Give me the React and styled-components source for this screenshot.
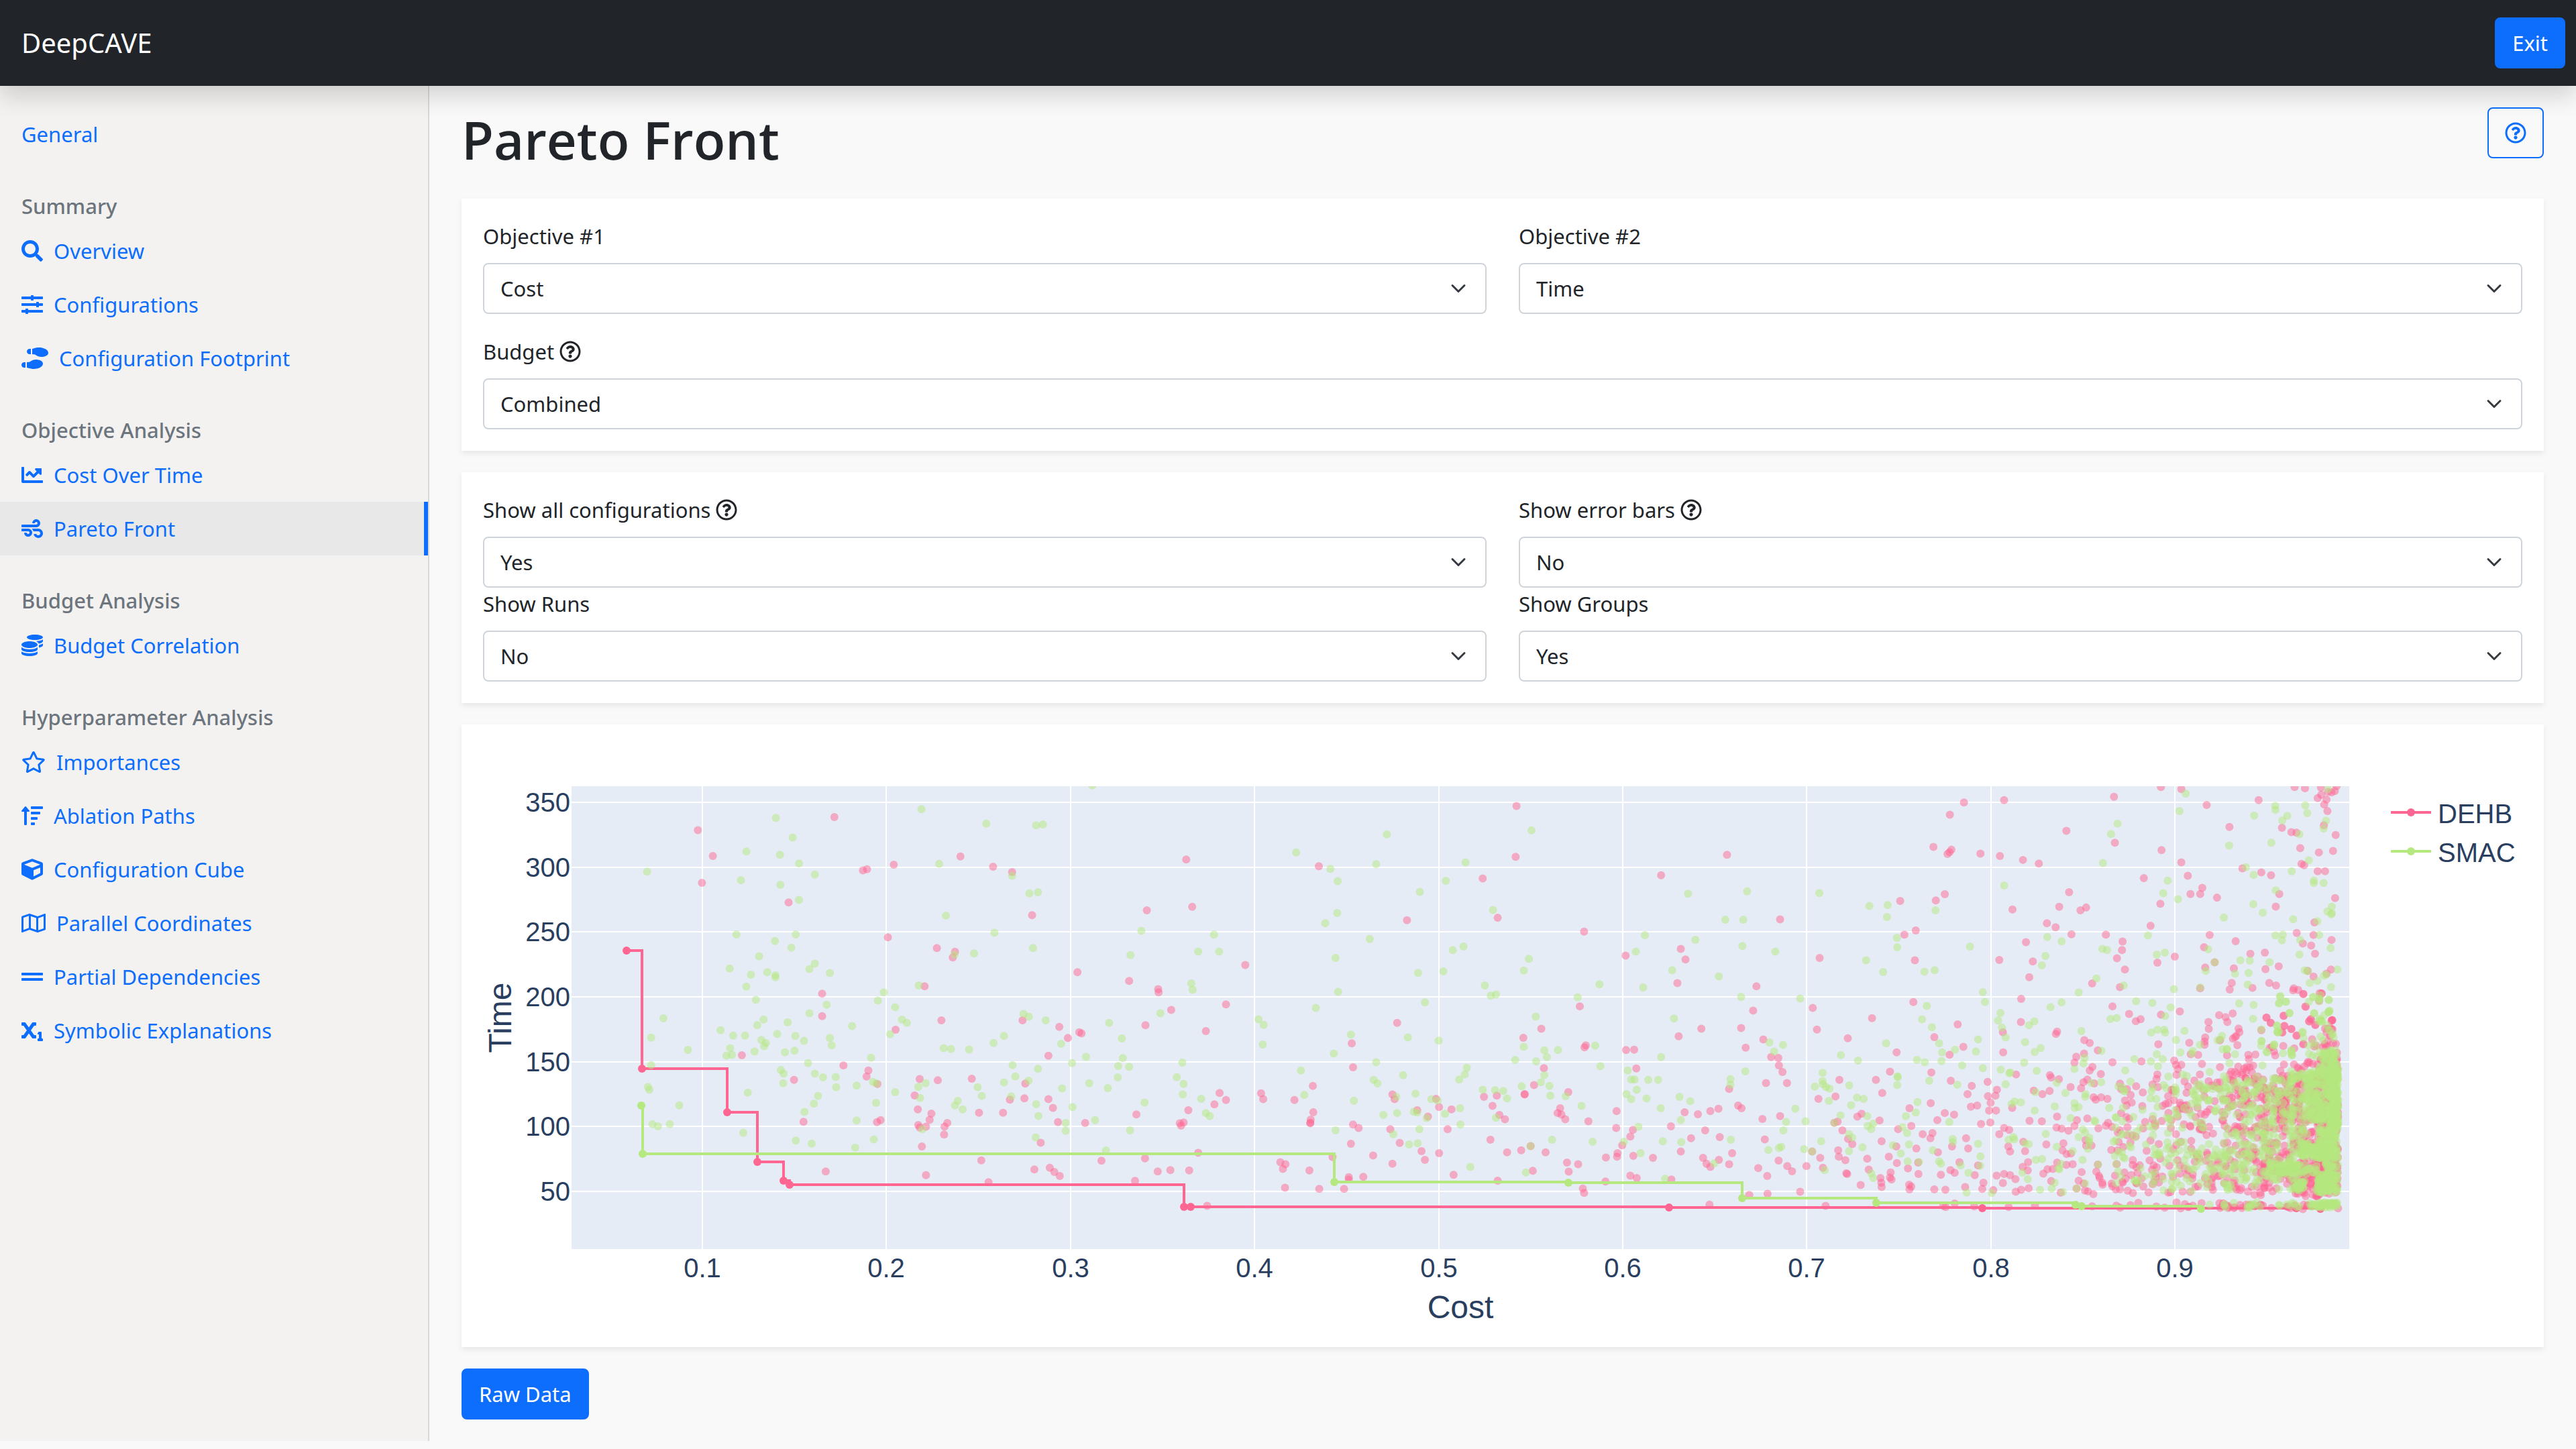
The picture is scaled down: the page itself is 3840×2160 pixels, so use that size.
import React from "react";
import styled, { createGlobalStyle } from "styled-components";
import {
  FaSearch,
  FaSlidersH,
  FaShoePrints,
  FaChartLine,
  FaWind,
  FaCoins,
  FaRegStar,
  FaSortAmountUp,
  FaCube,
  FaRegMap,
  FaGripLines,
  FaSubscript,
  FaRegQuestionCircle,
} from "react-icons/fa";

const color = {
  blue: "#0d6efd",
  dark: "#212529",
  muted: "#6c757d",
  page: "#f9f9f9",
  sidebar: "#f3f2f0",
  plot: "#e5ecf6",
  plotText: "#2a3f5f",
  dehb: "#ff6692",
  smac: "#b6e880",
};

const GlobalStyle = createGlobalStyle`
  * { box-sizing: border-box; }
  body {
    margin: 0;
    background: ${color.page};
    color: ${color.dark};
    font-family: "Noto Sans", "Open Sans", sans-serif;
    font-size: 31px;
    line-height: 48px;
  }
`;

const Navbar = styled.header`
  position: relative;
  z-index: 1;
  display: flex;
  align-items: center;
  justify-content: space-between;
  height: 128px;
  padding: 0 16px 0 32px;
  background: ${color.dark};
  box-shadow: 0 16px 32px rgba(0, 0, 0, 0.15);
`;

const Brand = styled.a`
  color: #fff;
  font-size: 40px;
  text-decoration: none;
`;

const Button = styled.button`
  display: inline-flex;
  align-items: center;
  justify-content: center;
  height: 76px;
  padding: 0 24px;
  border: 2px solid ${color.blue};
  border-radius: 8px;
  background: ${(p) => (p.$outline ? "transparent" : color.blue)};
  color: ${(p) => (p.$outline ? color.blue : "#fff")};
  font: inherit;
  cursor: pointer;

  svg {
    width: 32px;
    height: 32px;
  }
`;

const Layout = styled.div`
  display: flex;
  align-items: stretch;
`;

const Sidebar = styled.nav`
  flex: 0 0 640px;
  padding: 32px 0;
  border-right: 2px solid #d9d8d6;
  background: ${color.sidebar};
`;

const NavHeading = styled.h6`
  margin: 48px 0 8px;
  padding: 0 32px;
  color: ${color.muted};
  font-size: 31px;
  font-weight: 500;
  line-height: 38px;
`;

const NavLink = styled.a`
  display: flex;
  align-items: center;
  gap: 16px;
  padding: 16px 32px;
  border-right: 6px solid ${(p) => (p.$active ? color.blue : "transparent")};
  background: ${(p) => (p.$active ? "#e8e8e8" : "transparent")};
  color: ${color.blue};
  text-decoration: none;

  svg {
    width: ${(p) => p.$iconWidth}px;
    height: 32px;
  }
`;

const Main = styled.main`
  flex: 1;
  min-width: 0;
  padding: 32px 48px;
`;

const TitleRow = styled.div`
  display: flex;
  align-items: flex-start;
  justify-content: space-between;
  margin-bottom: 40px;
`;

const Title = styled.h1`
  margin: 0;
  font-family: "Open Sans", "Noto Sans", sans-serif;
  font-size: 78px;
  font-weight: 600;
  line-height: 96px;
`;

const Card = styled.section`
  margin-bottom: 32px;
  padding: 32px;
  background: #fff;
  box-shadow: 0 4px 8px rgba(0, 0, 0, 0.075);
`;

const Fields = styled.div`
  display: grid;
  grid-template-columns: 1fr 1fr;
  gap: ${(p) => (p.$spaced ? "32px" : "0")} 48px;
`;

const FieldBox = styled.div`
  grid-column: ${(p) => (p.$wide ? "1 / -1" : "auto")};
`;

const Label = styled.label`
  display: flex;
  align-items: center;
  gap: 8px;
  margin-bottom: 16px;

  svg {
    width: 32px;
    height: 32px;
  }
`;

const chevron =
  "url(\"data:image/svg+xml,%3csvg xmlns='http://www.w3.org/2000/svg' viewBox='0 0 16 16'%3e%3cpath fill='none' stroke='%23343a40' stroke-linecap='round' stroke-linejoin='round' stroke-width='2' d='M2 5l6 6 6-6'/%3e%3c/svg%3e\")";

const Select = styled.select`
  display: block;
  width: 100%;
  height: 76px;
  padding: 0 72px 0 24px;
  border: 2px solid #ced4da;
  border-radius: 8px;
  appearance: none;
  background: #fff ${chevron} no-repeat right 28px center / 24px 24px;
  color: ${color.dark};
  font: inherit;
`;

const Plot = styled.svg`
  display: block;
  width: 100%;
  height: auto;
  font-family: "Liberation Sans", Arial, sans-serif;
  font-size: 40px;

  text {
    fill: ${color.plotText};
  }
`;

const AxisTitle = styled.text`
  font-size: 48px;
`;

const navigation = [
  { links: [{ text: "General" }] },
  {
    heading: "Summary",
    links: [
      { text: "Overview", icon: FaSearch },
      { text: "Configurations", icon: FaSlidersH },
      { text: "Configuration Footprint", icon: FaShoePrints, iconWidth: 40 },
    ],
  },
  {
    heading: "Objective Analysis",
    links: [
      { text: "Cost Over Time", icon: FaChartLine },
      { text: "Pareto Front", icon: FaWind, active: true },
    ],
  },
  {
    heading: "Budget Analysis",
    links: [{ text: "Budget Correlation", icon: FaCoins }],
  },
  {
    heading: "Hyperparameter Analysis",
    links: [
      { text: "Importances", icon: FaRegStar, iconWidth: 36 },
      { text: "Ablation Paths", icon: FaSortAmountUp },
      { text: "Configuration Cube", icon: FaCube },
      { text: "Parallel Coordinates", icon: FaRegMap, iconWidth: 36 },
      { text: "Partial Dependencies", icon: FaGripLines },
      { text: "Symbolic Explanations", icon: FaSubscript },
    ],
  },
];

/* Evaluated configurations, stored as integer cells of tiles along the cost axis. */
const tiles = [
  {
    x: -40, y: -52, w: 0.676, h: 0.6122,
    dehb: "533,290 566,353 542,418 834,258 733,466 897,388 906,385 965,374 1112,354 1184,379 1226,392 1270,497 1523,485 952,551 1060,577 1100,586 1095,600 1033,670 1370,636 1484,657 1548,677 1549,685 807,688 807,743 1070,753 969,776 1249,753 1330,769 1374,782 1379,785 1349,796 1520,765 1306,839 630,838 745,898 854,863 909,875 905,890 929,908 1022,896 1062,899 1137,895 1255,907 1011,936 1018,970 1048,980 1044,995 1019,1008 1022,1014 1036,1012 1083,1003 1077,1012 1076,1031 1027,1060 936,996 928,1001 766,1000 1153,978 1206,978 1221,946 1253,943 1306,945 1316,966 1327,1001 1387,1003 1500,982 1289,1051 1158,1094 1174,1147 1036,1130 815,1121 1275,1116 1309,1112 1319,1122 1331,1132 1423,1095 1519,1089 1547,1121 1497,1144",
    smac: "421,391 705,260 742,308 640,342 714,350 756,371 791,398 628,412 715,423 756,460 618,544 703,560 749,544 739,576 668,597 603,627 650,642 686,636 704,643 704,648 640,671 791,615 779,628 824,638 661,703 817,715 779,736 678,751 664,765 731,758 457,748 430,795 583,777 611,790 637,790 708,786 748,791 767,803 673,801 683,808 679,816 604,821 608,837 596,839 658,829 725,831 746,827 511,825 430,862 873,767 824,796 828,814 776,857 791,883 809,892 837,891 838,916 716,874 722,883 721,906 423,915 426,922 643,929 798,937 789,956 768,976 492,960 433,1006 445,1011 471,1006 633,1027 749,1046 784,1053 883,912 915,844 919,903 927,907 926,954 883,997 921,1043 880,1063 943,685 930,705 968,721 983,751 994,759 957,787 968,928 1020,668 1026,239 1065,372 1080,498 1169,274 1279,278 1294,276 1403,181 1226,401 1264,444 1283,441 1187,540 1099,593 1142,590 1272,577 1511,535 1487,594 1251,737 1263,744 1300,753 1440,759 1553,736 1468,797 1334,810 1208,791 1185,808 1075,821 1091,823 1131,824 1227,862 1283,871 1233,890 1262,900 1208,904 1358,857 1389,842 1470,845 1460,864 1484,866 1459,892 1336,919 1396,906 1437,918 1035,906 1019,915 1023,942 1150,916 1159,937 1106,949 1100,960 1117,970 1224,938 1279,957 1284,986 1359,964 1518,953 1344,1003 1344,1022 1409,996 1486,1021 1278,1038 1433,1070 1028,1018",
  },
  {
    x: 980, y: -12, w: 0.6378, h: 0.5867,
    dehb: "107,309 121,429 417,326 245,577 72,691 153,745 200,677 623,463 800,357 879,173 877,302 835,457 1037,492 1217,349 1371,297 1134,553 1263,536 1274,563 1255,623 1027,682 1404,737 1311,739 1258,758 1135,793 1154,792 1159,840 1041,781 1038,786 937,739 895,762 943,839 920,882 600,724 494,776 497,837 403,884 185,902 200,920 173,931 112,946 101,977 92,979 95,985 282,903 287,918 360,920 404,951 398,970 397,978 397,979 497,982 510,991 492,1031 589,906 594,918 647,946 672,962 691,917 698,938 727,944 718,994 606,1029 657,1050 665,1072 698,1055 584,994 544,1061 589,1082 803,912 833,909 823,935 839,958 852,969 818,1021 857,1053 890,1048 947,1053 898,905 898,906 1000,900 981,941 975,953 984,957 993,969 1047,974 1113,948 1112,991 1126,1035 1115,1055 1114,1064 1088,1066 1151,996 1145,1013 1152,1062 1198,1067 1240,987 1272,951 1303,956 1332,948 1351,942 1397,934 1405,941 1376,892 1320,997 1287,1017 1354,1014 1263,1051 1315,1067 1323,1082 1332,1090 1352,1072 1376,1083 1383,1055 1330,1186 1023,1083 997,1079 1001,1102 1087,1127 1145,1112 1160,1118 1241,1122 1034,1145 1037,1156 917,1100 732,1110 835,1125 521,1115 487,1116 487,1122 476,1146 418,1146 338,1143 395,1099 339,1083 327,1078 333,1095 449,1065 135,1054 114,1099 70,1098 156,1189 912,1037",
    smac: "364,291 576,245 914,235 551,321 444,333 461,364 653,391 460,445 432,471 714,363 760,316 824,437 536,511 172,500 135,543 184,543 119,624 122,640 276,715 288,729 286,779 410,686 456,559 462,645 649,597 665,672 708,593 730,539 755,530 908,561 896,591 805,629 819,655 831,652 492,754 452,802 551,824 375,845 383,907 499,922 545,869 554,878 614,857 625,761 697,769 643,904 598,912 600,953 568,958 680,918 695,922 639,950 647,952 669,966 652,994 648,1030 628,1033 591,1007 456,997 98,825 85,862 101,879 99,906 142,917 153,953 162,961 763,838 758,855 745,868 747,941 712,955 748,982 771,1090 800,894 829,895 848,897 857,916 831,965 876,818 896,785 891,885 924,708 944,794 950,811 925,822 976,793 944,857 936,875 956,884 958,909 994,910 1031,935 962,1021 901,1104 912,1037 1057,1026 1063,782 1075,834 1073,626 1022,659 1158,543 1179,501 1280,396 1297,513 1243,590 1175,634 1247,713 1352,606 1367,462 1409,462 1407,529 1404,658 1217,811 1139,845 1147,868 1155,868 1187,869 1210,869 1160,894 1136,905 1147,918 1183,916 1216,941 1260,912 1285,923 1263,971 1264,1027 1221,1025 1164,988 1130,1026 1169,1055 1226,1120 1341,1081 1380,1021 1379,867 1379,881",
  },
  {
    x: 1880, y: -12, w: 0.4464, h: 0.5867,
    dehb: "734,164 868,158 687,195 632,277 692,284 686,290 679,295 789,294 854,300 931,310 984,319 1076,236 120,461 252,559 521,414 640,413 670,397 573,489 535,500 570,565 896,436 1011,471 1040,481 1052,429 1085,392 1142,431 1123,438 1093,499 1208,500 941,519 852,564 964,568 952,608 925,663 924,722 1162,624 1045,746 1041,752 1136,768 1154,775 1181,794 1135,802 1109,810 1103,825 1163,836 1154,845 1191,854 1230,682 1230,824 41,631 30,693 64,766 5,787 90,811 114,813 116,832 128,849 73,877 143,877 61,968 120,961 69,1020 115,1074 144,1088 160,1101 47,1093 77,1113 78,1158 17,1161 187,1153 208,1088 227,1051 254,1067 263,1092 229,686 243,741 346,763 427,712 565,671 635,760 713,728 732,785 686,805 509,799 487,848 440,869 318,869 305,911 248,917 461,902 625,850 690,871 760,884 746,905 813,874 814,910 844,894 839,909 823,927 818,947 841,947 757,937 778,934 908,855 864,748 865,799 895,940 623,928 552,941 670,953 701,957 645,971 558,986 514,994 452,972 392,955 378,962 312,975 301,978 328,997 347,1019 361,1032 314,1048 316,1064 338,1073 341,1106 344,1108 389,1136 411,1069 416,1097 455,1118 458,1130 459,1141 489,1104 487,1117 492,1122 459,1025 483,1064 508,1038 510,1080 547,1094 575,1043 581,1079 582,1108 551,1135 558,1140 552,1147 596,1007 629,1004 622,1017 647,1053 657,1110 635,1147 672,1148 694,1038 741,1017 748,1043 791,981 822,977 719,1078 689,1098 703,1105 781,1086 770,1111 738,1141 799,1130 795,1146 832,1149 843,1112 868,1108 888,1111 864,1131 906,1121 907,1153 925,1148 950,1144 852,1007 868,991 885,996 882,1038 888,1051 932,1026 938,1050 948,1078 930,1090 947,1099 953,973 994,974 1009,1033 967,896 996,905 1020,897 1021,857 1025,863 1051,867 1090,887 1045,962 1043,990 1060,993 1083,998 1103,986 1111,971 1146,967 1183,992 1125,890 1133,875 1146,868 1169,878 1167,913 1174,919 1192,913 1213,917 1066,1030 1063,1048 1077,1057 1097,1083 1076,1085 1045,1079 1031,1095 1013,1096 999,1107 1025,1126 1057,1155 1091,1056 1140,1022 1142,1036 1160,1036 1127,1103 1117,1125 1134,1132 1110,1145 1138,1150 1148,1152 1166,1159 1176,1102 1185,1113 1187,1118 1196,1130 1197,1135 1181,1084 1226,1047 1215,978 1208,985 1228,988 1230,1139 1227,1132 272,1189 665,1189 673,1192 703,1183 768,1190 883,1192 971,1188 1162,1190",
    smac: "10,390 251,394 418,427 479,425 477,455 639,438 868,375 1225,244 1198,318 104,543 407,565 464,595 510,508 511,532 602,594 636,590 754,530 1012,506 1060,517 1006,554 994,578 1176,611 1117,647 1060,672 1023,684 1196,536 1212,539 187,662 84,774 100,797 130,780 4,847 610,681 594,715 627,735 651,776 661,799 659,821 704,792 728,832 797,646 804,671 781,766 774,797 797,839 848,718 856,699 861,736 873,761 857,843 885,852 889,850 873,880 938,773 951,730 969,720 990,788 970,798 935,825 977,846 1126,745 1223,714 1193,795 1137,813 1133,827 1103,841 323,806 380,820 474,776 577,818 603,824 618,871 712,881 511,882 512,860 513,862 262,851 262,872 263,880 236,886 273,887 285,891 351,883 283,922 377,914 399,917 357,933 322,959 171,942 140,976 205,974 131,997 81,1047 116,1042 124,1039 200,1045 257,1025 269,1098 411,961 431,980 412,986 424,994 350,1007 361,1016 350,1050 395,1040 227,1051 301,978 579,925 573,952 540,961 529,989 544,1004 550,1033 497,1035 523,1056 546,1076 584,1077 424,1106 431,1118 630,1048 651,1076 657,1082 685,976 696,1019 697,1027 723,1086 749,1105 743,1155 789,1063 781,1031 788,1087 827,1156 903,924 924,926 893,930 970,947 973,900 1044,876 1073,902 1037,936 1103,928 1104,940 1117,938 1090,966 1140,905 1139,912 1160,877 1192,875 1219,940 883,1021 899,1014 902,1020 937,1030 950,1032 1007,1006 1044,1039 974,1072 995,1070 929,1104 947,1121 988,1148 1027,1145 1037,1130 1052,1096 1058,1082 1050,1094 1097,1050 1130,1072 1117,1014 1131,995 1139,1003 1153,1016 1151,1024 1153,1029 1148,1044 1170,972 1172,975 1182,1084 1110,1145 1139,1132 1064,1154",
  },
  {
    x: 2430, y: -12, w: 0.44, h: 0.6059,
    dehb: "3,145 162,121 231,126 317,165 493,153 615,121 650,124 704,122 757,119 693,148 705,140 728,133 740,134 751,131 723,152 715,164 726,180 394,219 6,258 572,221 604,232 621,233 714,215 754,239 634,271 697,282 745,278 164,276 231,306 438,321 638,310 647,313 502,331 535,338 693,328 718,328 104,345 253,339 302,369 262,384 295,384 352,393 563,384 551,415 752,394 160,408 127,462 682,454 622,480 679,485 740,497 327,485 32,501 30,522 13,542 40,570 415,500 308,515 465,531 514,528 643,506 671,511 684,531 209,538 150,553 312,565 344,552 409,567 516,569 561,562 659,573 679,587 738,570 723,580 23,613 295,616 402,603 395,619 472,615 529,603 552,609 612,616 610,621 627,620 645,630 700,628 706,629 698,647 651,661 226,673 54,679 93,692 77,697 162,681 359,682 381,687 387,699 405,678 323,699 324,716 520,688 534,701 578,684 580,709 604,716 572,724 502,719 425,715 428,724 312,737 310,747 310,755 258,750 153,754 406,740 413,736 417,733 421,756 362,744 622,732 645,753 664,697 670,692 685,706 742,694 740,696 734,714 727,716 743,717 207,794 213,804 231,804 219,815 96,796 263,778 288,780 386,781 301,802 362,810 482,779 458,780 460,790 294,828 150,828 147,839 242,845 215,829 78,857 152,859 400,821 412,822 420,826 435,828 395,828 440,880 450,877 432,882 460,880 423,880 334,855 343,857 352,848 362,847 227,898 229,903 224,915 235,911 298,925 311,927 318,920 143,1072 144,1080 134,1098 140,1090 155,1094 335,1105 338,1112 120,1118 67,1120",
    smac: "15,211 246,137 225,180 393,265 478,191 549,167 550,177 590,192 573,203 651,166 658,185 728,126 721,204 713,223 631,237 536,258 663,301 605,328 450,318 476,337 185,351 170,382 220,397 551,375 680,351 680,357 713,357 475,409 507,430 375,442 610,446 741,415 726,427 741,431 739,434 692,451 118,486 550,486 575,484 572,498 698,485 634,497 631,533 737,517 322,520 148,533 175,528 431,547 463,548 530,552 344,552 314,573 413,580 459,578 456,607 649,572 660,574 760,570 714,585 723,582 666,603 692,598 738,613 36,609 206,618 295,614 78,648 133,652 195,663 12,689 427,653 476,657 474,691 565,637 562,653 585,649 677,638 702,633 698,642 698,648 731,644 732,672 730,675 681,677 597,677 704,694 708,697 176,684 129,725 150,718 173,718 176,725 242,721 213,743 556,708 556,723 560,725 642,725 502,717 503,746 369,733 364,742 354,744 725,707 728,718 742,730 545,755 294,755 270,770 267,776 228,774 148,778 72,790 128,796 168,790 152,808 41,818 371,766 385,767 413,778 394,800 327,822 386,765 520,772 604,770 606,780 506,806 59,846 187,833 236,828 250,832 210,860 211,866 213,867 214,925 218,930 157,1020 156,1024 158,1028 199,1110 202,1108 251,1027 187,1035 210,1022",
    dehbDense: [[0, 130, 850, 1115, 46], [130, 260, 850, 1120, 46], [260, 400, 840, 1120, 66], [400, 520, 800, 1125, 105], [0, 400, 1143, 1158, 16], [360, 620, 1148, 1158, 24], [620, 680, 1146, 1160, 5]],
    smacDense: [[0, 130, 850, 1105, 40], [130, 260, 850, 1115, 48], [260, 400, 850, 1115, 82], [370, 520, 830, 1110, 125], [320, 520, 1142, 1156, 14], [560, 680, 1144, 1156, 10]],
  },
  {
    x: 2520, y: 368, w: 0.3333, h: 0.3333,
    dehb: "592,62 580,5 663,3 415,111 435,134 492,102 496,148 527,162 550,192 487,178 607,128 614,118 634,144 708,124 710,122 620,208 630,240 540,248 491,238 580,230 638,236 678,160 708,162 685,178 726,228 700,192 692,212 676,228 681,238 668,242 713,226 689,238 731,268 494,320 478,349 539,320 560,340 555,334 571,346 602,308 608,312 598,316 624,318 585,330 662,370 655,376 670,366 449,262 455,280 440,242 430,246 736,964",
    smac: "478,14 472,46 503,40 519,90 606,40 626,18 652,28 694,32 698,80 692,86 674,100 629,92 648,126 660,130 654,116 577,174 582,202 462,146 465,176 472,172 450,230 448,238 394,216 392,236 418,266 490,270 528,256 530,280 526,268 658,196 670,212 626,222 636,238 606,272 622,280 640,286 603,236 712,184 716,202 700,168",
    /* left, right, top, bottom, count of the crowded cells near cost 1.0 */
    dehbDense: [[400, 560, 370, 890, 125], [465, 520, 440, 570, 22], [540, 640, 370, 900, 95], [640, 736, 290, 420, 50], [640, 738, 400, 910, 190], [560, 730, 750, 910, 70]],
    smacDense: [[400, 540, 380, 880, 125], [520, 600, 350, 720, 62], [590, 690, 350, 580, 130], [570, 700, 670, 738, 80], [690, 738, 340, 600, 240], [650, 736, 600, 740, 110], [650, 734, 255, 350, 56], [440, 640, 765, 812, 62], [540, 590, 840, 885, 26], [640, 736, 810, 895, 100], [680, 736, 735, 820, 26], [620, 735, 938, 960, 40]],
  },
];

function seeded(seed) {
  let s = seed;
  return () => {
    s = (s * 1664525 + 1013904223) % 4294967296;
    return s / 4294967296;
  };
}

function collect(series, seed) {
  const random = seeded(seed);
  return tiles.flatMap((tile) => {
    const cells = tile[series].split(" ").map((cell) => cell.split(",").map(Number));
    (tile[`${series}Dense`] || []).forEach(([left, right, top, bottom, count]) => {
      for (let i = 0; i < count; i += 1) {
        cells.push([left + random() * (right - left), top + random() * (bottom - top)]);
      }
    });
    return cells.map(([cx, cy]) => [tile.x + cx * tile.w, tile.y + cy * tile.h]);
  });
}

const runs = [
  {
    name: "DEHB",
    color: color.dehb,
    legendY: 99,
    points: collect("dehb", 7),
    front: [[214, 305], [237, 481], [364, 546], [409, 620], [448, 648], [457, 654], [1045, 687], [1055, 687], [1768, 688], [2235, 689], [2703, 689], [2739, 690]],
  },
  {
    name: "SMAC",
    color: color.smac,
    legendY: 157,
    points: collect("smac", 23),
    front: [[236, 536], [238, 608], [1269, 650], [1618, 651], [1877, 674], [2077, 681], [2374, 684], [2383, 686], [2561, 690]],
  },
];

const area = { left: 132, top: 60, right: 2782, bottom: 750 };
const costTicks = [0.1, 0.2, 0.3, 0.4, 0.5, 0.6, 0.7, 0.8, 0.9];
const timeTicks = [50, 100, 150, 200, 250, 300, 350];
const costX = (cost) => Math.round(52.6 + cost * 2744);
const timeY = (time) => Math.round(664 - (time - 50) * 1.9333);

const stepPath = (front) =>
  front.map(([x, y], i) => (i === 0 ? `M${x} ${y}` : `H${x}V${y}`)).join("");

function ParetoPlot() {
  return (
    <Plot viewBox="0 0 3040 864" role="img" aria-label="Pareto front of cost and time">
      <defs>
        <clipPath id="plot-area">
          <rect x={area.left} y={area.top} width={area.right - area.left} height={area.bottom - area.top} />
        </clipPath>
      </defs>
      <rect
        x={area.left}
        y={area.top}
        width={area.right - area.left}
        height={area.bottom - area.top}
        fill={color.plot}
      />
      <g stroke="#fff" strokeWidth="2">
        {costTicks.map((t) => (
          <line key={t} x1={costX(t)} x2={costX(t)} y1={area.top} y2={area.bottom} />
        ))}
        {timeTicks.map((t) => (
          <line key={t} x1={area.left} x2={area.right} y1={timeY(t)} y2={timeY(t)} />
        ))}
      </g>
      <g clipPath="url(#plot-area)">
        {runs.map((run) => (
          <g key={run.name} fill={run.color}>
            <g fillOpacity="0.5">
              {run.points.map(([x, y], i) => (
                <circle key={i} cx={x} cy={y} r="6" />
              ))}
            </g>
            <path d={stepPath(run.front)} fill="none" stroke={run.color} strokeWidth="4" />
            {run.front.map(([x, y]) => (
              <circle key={x} cx={x} cy={y} r="6" />
            ))}
          </g>
        ))}
      </g>
      {costTicks.map((t) => (
        <text key={t} x={costX(t)} y="792" textAnchor="middle">{t}</text>
      ))}
      {timeTicks.map((t) => (
        <text key={t} x="130" y={timeY(t) + 14} textAnchor="end">{t}</text>
      ))}
      <AxisTitle x="1457" y="853" textAnchor="middle">Cost</AxisTitle>
      <AxisTitle transform="translate(42 405) rotate(-90)" textAnchor="middle">Time</AxisTitle>
      {runs.map((run) => (
        <g key={run.name}>
          <line x1="2844" x2="2904" y1={run.legendY} y2={run.legendY} stroke={run.color} strokeWidth="4" />
          <circle cx="2874" cy={run.legendY} r="6" fill={run.color} />
          <text x="2914" y={run.legendY + 16}>{run.name}</text>
        </g>
      ))}
    </Plot>
  );
}

function Field({ id, label, value, options, help, wide }) {
  return (
    <FieldBox $wide={wide}>
      <Label htmlFor={id}>
        {label}
        {help && <FaRegQuestionCircle aria-hidden="true" />}
      </Label>
      <Select id={id} defaultValue={value}>
        {options.map((option) => (
          <option key={option}>{option}</option>
        ))}
      </Select>
    </FieldBox>
  );
}

const objectives = ["Cost", "Time"];
const yesNo = ["Yes", "No"];

export default function App() {
  return (
    <>
      <GlobalStyle />
      <Navbar>
        <Brand href="#">DeepCAVE</Brand>
        <Button type="button">Exit</Button>
      </Navbar>
      <Layout>
        <Sidebar aria-label="Plugins">
          {navigation.map((group) => (
            <React.Fragment key={group.heading || "general"}>
              {group.heading && <NavHeading>{group.heading}</NavHeading>}
              {group.links.map(({ text, icon: Icon, iconWidth = 32, active }) => (
                <NavLink key={text} href="#" $active={active} $iconWidth={iconWidth}>
                  {Icon && <Icon aria-hidden="true" />}
                  {text}
                </NavLink>
              ))}
            </React.Fragment>
          ))}
        </Sidebar>
        <Main>
          <TitleRow>
            <Title>Pareto Front</Title>
            <Button type="button" $outline aria-label="Help">
              <FaRegQuestionCircle aria-hidden="true" />
            </Button>
          </TitleRow>
          <Card>
            <Fields $spaced>
              <Field id="objective-1" label="Objective #1" value="Cost" options={objectives} />
              <Field id="objective-2" label="Objective #2" value="Time" options={objectives} />
              <Field id="budget" label="Budget" value="Combined" options={["Combined"]} help wide />
            </Fields>
          </Card>
          <Card>
            <Fields>
              <Field id="all-configs" label="Show all configurations" value="Yes" options={yesNo} help />
              <Field id="error-bars" label="Show error bars" value="No" options={yesNo} help />
              <Field id="show-runs" label="Show Runs" value="No" options={yesNo} />
              <Field id="show-groups" label="Show Groups" value="Yes" options={yesNo} />
            </Fields>
          </Card>
          <Card>
            <ParetoPlot />
          </Card>
          <Button type="button">Raw Data</Button>
        </Main>
      </Layout>
    </>
  );
}
